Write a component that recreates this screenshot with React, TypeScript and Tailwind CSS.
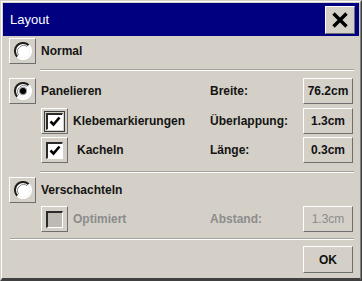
import React from 'react';

const font = { fontFamily: '"Liberation Sans", Arial, Helvetica, sans-serif' };

const raised =
  'border border-t-white border-l-white border-r-[#6e6e6e] border-b-[#6e6e6e] bg-[#d4d0c8]';

const Radio: React.FC<{ checked?: boolean }> = ({ checked }) => (
  <div className={`w-[27px] h-[26px] flex items-center justify-center ${raised}`}>
    <svg width="18" height="18" viewBox="0 0 18 18">
      <circle cx="9" cy="9" r="7" fill="#fff" />
      <path d="M3.3 14.7 A8 8 0 0 1 14.7 3.3" fill="none" stroke="#1e1e1e" strokeWidth="2" />
      <path d="M4.8 13.2 A6 6 0 0 1 13.2 4.8" fill="none" stroke="#8a8a8a" strokeWidth="1" />
      <path d="M14.7 3.3 A8 8 0 0 1 3.3 14.7" fill="none" stroke="#ffffff" strokeWidth="2" />
      {checked && (
        <>
          <circle cx="9" cy="9" r="4.2" fill="#9a9a9a" />
          <circle cx="9" cy="9" r="3" fill="#000" />
        </>
      )}
    </svg>
  </div>
);

const Check: React.FC<{ checked?: boolean; disabled?: boolean; focus?: boolean }> = ({ checked, disabled, focus }) => (
  <div className={`w-[27px] h-[26px] flex items-center justify-center ${raised}`}>
    <div className={`flex items-center justify-center ${focus ? 'border border-[#3a3a3a] p-[1px]' : ''}`}>
      <div
        className={`w-[17px] h-[17px] border-t-2 border-l-2 border-t-[#2a2a2a] border-l-[#2a2a2a] border-b border-r border-b-white border-r-white flex items-center justify-center ${disabled ? 'bg-[#bdbab4]' : 'bg-white'}`}
      >
        {checked && (
          <svg width="12" height="11" viewBox="0 0 12 11">
            <path d="M1.5 5.5 L4.5 8.5 L10.5 1.5" fill="none" stroke="#000" strokeWidth="2.6" />
          </svg>
        )}
      </div>
    </div>
  </div>
);

const ValueBtn: React.FC<{ value: string; disabled?: boolean }> = ({ value, disabled }) => (
  <div
    className={`w-[50px] h-[26px] mr-[1px] flex items-center justify-center text-[12px] font-bold ${raised} ${disabled ? 'text-[#8c8c8c] font-normal' : 'text-[#111]'}`}
  >
    {value}
  </div>
);

const Separator: React.FC<{ className?: string }> = ({ className }) => (
  <div className={`h-[2px] border-t border-t-[#a6a39d] border-b border-b-white ${className ?? ''}`} />
);

export default function App() {
  return (
    <div className="w-[362px] h-[281px] overflow-hidden" style={font}>
      <div className="w-full h-full border border-t-[#d4d0c8] border-l-[#d4d0c8] border-r-[#404040] border-b-[#404040]">
        <div className="w-full h-full bg-[#d4d0c8] border border-t-white border-l-white border-r-[#808080] border-b-[#404040] border-b-2 p-[1px] flex flex-col">
          {/* title bar */}
          <div className="h-[33px] bg-[#000080] flex items-center justify-between pl-[7px] pr-[4px]">
            <span className="text-white text-[13px]">Layout</span>
            <div className={`w-[30px] h-[28px] flex items-center justify-center ${raised}`}>
              <svg width="18" height="18" viewBox="0 0 18 18">
                <path d="M2.5 2.5 L15.5 15.5 M15.5 2.5 L2.5 15.5" stroke="#000" strokeWidth="3.4" />
              </svg>
            </div>
          </div>

          {/* body */}
          <div className="flex flex-col pl-[6px] pr-[5px] text-[12px] font-bold text-[#141414]">
            <div className="mt-[2px] h-[26px] flex items-center">
              <Radio />
              <span className="ml-[5px]">Normal</span>
            </div>

            <Separator className="mt-[5px] ml-[31px]" />

            <div className="mt-[7px] h-[26px] flex items-center">
              <div className="w-[201px] flex items-center">
                <Radio checked />
                <span className="ml-[5px]">Panelieren</span>
              </div>
              <span className="flex-1">Breite:</span>
              <ValueBtn value="76.2cm" />
            </div>

            <div className="mt-[4px] h-[26px] flex items-center">
              <div className="w-[201px] flex items-center pl-[32px]">
                <Check checked focus />
                <span className="ml-[5px]">Klebemarkierungen</span>
              </div>
              <span className="flex-1">Überlappung:</span>
              <ValueBtn value="1.3cm" />
            </div>

            <div className="mt-[3px] h-[26px] flex items-center">
              <div className="w-[201px] flex items-center pl-[32px]">
                <Check checked />
                <span className="ml-[9px]">Kacheln</span>
              </div>
              <span className="flex-1">Länge:</span>
              <ValueBtn value="0.3cm" />
            </div>

            <Separator className="mt-[8px] ml-[31px]" />

            <div className="mt-[4px] h-[26px] flex items-center">
              <Radio />
              <span className="ml-[5px]">Verschachteln</span>
            </div>

            <div className="mt-[3px] h-[26px] flex items-center">
              <div className="w-[201px] flex items-center pl-[32px]">
                <Check disabled />
                <span className="ml-[5px] text-[#8c8c8c]">Optimiert</span>
              </div>
              <span className="flex-1 text-[#8c8c8c]">Abstand:</span>
              <ValueBtn value="1.3cm" disabled />
            </div>

            <Separator className="mt-[6px] ml-[1px]" />

            <div className="mt-[6px] flex justify-end">
              <div className={`w-[50px] h-[27px] mr-[1px] flex items-center justify-center text-[12px] font-bold text-[#111] ${raised}`}>
                OK
              </div>
            </div>
          </div>
        </div>
      </div>
    </div>
  );
}
